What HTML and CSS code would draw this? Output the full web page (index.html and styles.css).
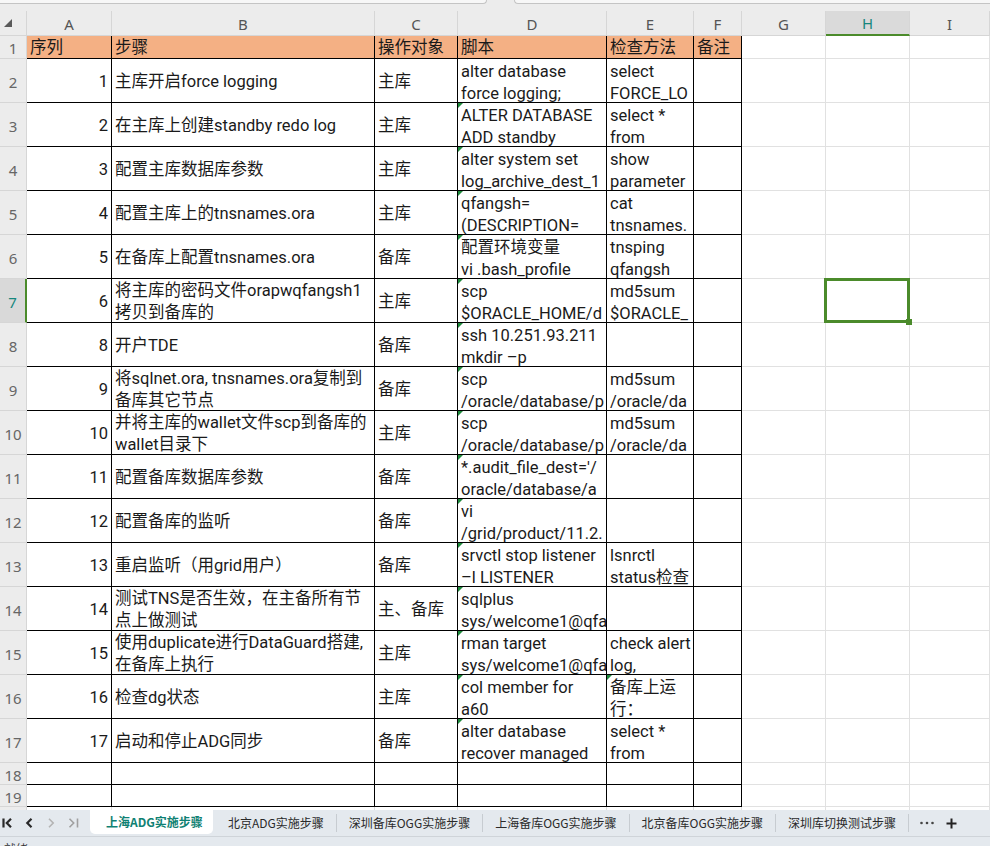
FILE: index.html
```html
<!DOCTYPE html>
<html lang="zh-CN">
<head>
<meta charset="utf-8">
<title>上海ADG实施步骤</title>
<link rel="stylesheet" href="styles.css">
</head>
<body>
<div class="app">
  <div class="topstrip"><div class="tbox tbox1"></div><div class="tbox tbox2"></div></div>
  <div class="sheet">
    <!-- column headers -->
    <div class="corner"><svg width="9" height="9" viewBox="0 0 9 9"><polygon points="8,0 8,8 0,8" fill="#5a5a5a"/></svg></div>
    <div class="ch">A</div><div class="ch">B</div><div class="ch">C</div><div class="ch">D</div><div class="ch">E</div><div class="ch">F</div><div class="ch">G</div><div class="ch act">H</div><div class="ch">I</div>

    <!-- row 1 -->
    <div class="rh">1</div>
    <div class="c t hd mid"><span>序列</span></div>
    <div class="c t hd mid"><span>步骤</span></div>
    <div class="c t hd mid"><span>操作对象</span></div>
    <div class="c t hd mid"><span>脚本</span></div>
    <div class="c t hd mid"><span>检查方法</span></div>
    <div class="c t hd mid"><span>备注</span></div>
    <div class="c"></div><div class="c"></div><div class="c"></div>

    <!-- row 2 -->
    <div class="rh">2</div>
    <div class="c t num"><span>1</span></div>
    <div class="c t mid"><span>主库开启force logging</span></div>
    <div class="c t mid"><span>主库</span></div>
    <div class="c t top">alter database<br>force logging;</div>
    <div class="c t top">select<br>FORCE_LO</div>
    <div class="c t"></div>
    <div class="c"></div><div class="c"></div><div class="c"></div>

    <!-- row 3 -->
    <div class="rh">3</div>
    <div class="c t num"><span>2</span></div>
    <div class="c t mid"><span>在主库上创建standby redo log</span></div>
    <div class="c t mid"><span>主库</span></div>
    <div class="c t top tri">ALTER DATABASE<br>ADD standby</div>
    <div class="c t top">select *<br>from</div>
    <div class="c t"></div>
    <div class="c"></div><div class="c"></div><div class="c"></div>

    <!-- row 4 -->
    <div class="rh">4</div>
    <div class="c t num"><span>3</span></div>
    <div class="c t mid"><span>配置主库数据库参数</span></div>
    <div class="c t mid"><span>主库</span></div>
    <div class="c t top tri">alter system set<br>log_archive_dest_1</div>
    <div class="c t top">show<br>parameter</div>
    <div class="c t"></div>
    <div class="c"></div><div class="c"></div><div class="c"></div>

    <!-- row 5 -->
    <div class="rh">5</div>
    <div class="c t num"><span>4</span></div>
    <div class="c t mid"><span>配置主库上的tnsnames.ora</span></div>
    <div class="c t mid"><span>主库</span></div>
    <div class="c t top tri">qfangsh=<br>(DESCRIPTION=</div>
    <div class="c t top">cat<br>tnsnames.</div>
    <div class="c t"></div>
    <div class="c"></div><div class="c"></div><div class="c"></div>

    <!-- row 6 -->
    <div class="rh">6</div>
    <div class="c t num"><span>5</span></div>
    <div class="c t mid"><span>在备库上配置tnsnames.ora</span></div>
    <div class="c t mid"><span>备库</span></div>
    <div class="c t top tri">配置环境变量<br>vi .bash_profile</div>
    <div class="c t top">tnsping<br>qfangsh</div>
    <div class="c t"></div>
    <div class="c"></div><div class="c"></div><div class="c"></div>

    <!-- row 7 -->
    <div class="rh act">7</div>
    <div class="c t num"><span>6</span></div>
    <div class="c t mid"><span>将主库的密码文件orapwqfangsh1<br>拷贝到备库的</span></div>
    <div class="c t mid"><span>主库</span></div>
    <div class="c t top tri">scp<br>$ORACLE_HOME/d</div>
    <div class="c t top">md5sum<br>$ORACLE_</div>
    <div class="c t"></div>
    <div class="c"></div><div class="c sel"></div><div class="c"></div>

    <!-- row 8 -->
    <div class="rh">8</div>
    <div class="c t num"><span>8</span></div>
    <div class="c t mid"><span>开户TDE</span></div>
    <div class="c t mid"><span>备库</span></div>
    <div class="c t top tri">ssh 10.251.93.211<br>mkdir –p</div>
    <div class="c t top"></div>
    <div class="c t"></div>
    <div class="c"></div><div class="c"></div><div class="c"></div>

    <!-- row 9 -->
    <div class="rh">9</div>
    <div class="c t num"><span>9</span></div>
    <div class="c t mid"><span>将sqlnet.ora, tnsnames.ora复制到<br>备库其它节点</span></div>
    <div class="c t mid"><span>备库</span></div>
    <div class="c t top tri">scp<br>/oracle/database/p</div>
    <div class="c t top">md5sum<br>/oracle/da</div>
    <div class="c t"></div>
    <div class="c"></div><div class="c"></div><div class="c"></div>

    <!-- row 10 -->
    <div class="rh">10</div>
    <div class="c t num"><span>10</span></div>
    <div class="c t mid"><span>并将主库的wallet文件scp到备库的<br>wallet目录下</span></div>
    <div class="c t mid"><span>主库</span></div>
    <div class="c t top tri">scp<br>/oracle/database/p</div>
    <div class="c t top">md5sum<br>/oracle/da</div>
    <div class="c t"></div>
    <div class="c"></div><div class="c"></div><div class="c"></div>

    <!-- row 11 -->
    <div class="rh">11</div>
    <div class="c t num"><span>11</span></div>
    <div class="c t mid"><span>配置备库数据库参数</span></div>
    <div class="c t mid"><span>备库</span></div>
    <div class="c t top tri">*.audit_file_dest='/<br>oracle/database/a</div>
    <div class="c t top"></div>
    <div class="c t"></div>
    <div class="c"></div><div class="c"></div><div class="c"></div>

    <!-- row 12 -->
    <div class="rh">12</div>
    <div class="c t num"><span>12</span></div>
    <div class="c t mid"><span>配置备库的监听</span></div>
    <div class="c t mid"><span>备库</span></div>
    <div class="c t top tri">vi<br>/grid/product/11.2.</div>
    <div class="c t top"></div>
    <div class="c t"></div>
    <div class="c"></div><div class="c"></div><div class="c"></div>

    <!-- row 13 -->
    <div class="rh">13</div>
    <div class="c t num"><span>13</span></div>
    <div class="c t mid"><span>重启监听（用grid用户）</span></div>
    <div class="c t mid"><span>备库</span></div>
    <div class="c t top tri">srvctl stop listener<br>–l LISTENER</div>
    <div class="c t top">lsnrctl<br>status检查</div>
    <div class="c t"></div>
    <div class="c"></div><div class="c"></div><div class="c"></div>

    <!-- row 14 -->
    <div class="rh">14</div>
    <div class="c t num"><span>14</span></div>
    <div class="c t mid"><span>测试TNS是否生效，在主备所有节<br>点上做测试</span></div>
    <div class="c t mid"><span>主、备库</span></div>
    <div class="c t top tri">sqlplus<br>sys/welcome1@qfa</div>
    <div class="c t top"></div>
    <div class="c t"></div>
    <div class="c"></div><div class="c"></div><div class="c"></div>

    <!-- row 15 -->
    <div class="rh">15</div>
    <div class="c t num"><span>15</span></div>
    <div class="c t mid"><span>使用duplicate进行DataGuard搭建,<br>在备库上执行</span></div>
    <div class="c t mid"><span>主库</span></div>
    <div class="c t top tri">rman target<br>sys/welcome1@qfa</div>
    <div class="c t top">check alert<br>log,</div>
    <div class="c t"></div>
    <div class="c"></div><div class="c"></div><div class="c"></div>

    <!-- row 16 -->
    <div class="rh">16</div>
    <div class="c t num"><span>16</span></div>
    <div class="c t mid"><span>检查dg状态</span></div>
    <div class="c t mid"><span>主库</span></div>
    <div class="c t top tri">col member for<br>a60</div>
    <div class="c t top tri">备库上运<br>行：</div>
    <div class="c t"></div>
    <div class="c"></div><div class="c"></div><div class="c"></div>

    <!-- row 17 -->
    <div class="rh">17</div>
    <div class="c t num"><span>17</span></div>
    <div class="c t mid"><span>启动和停止ADG同步</span></div>
    <div class="c t mid"><span>备库</span></div>
    <div class="c t top tri">alter database<br>recover managed</div>
    <div class="c t top">select *<br>from</div>
    <div class="c t"></div>
    <div class="c"></div><div class="c"></div><div class="c"></div>

    <!-- row 18 -->
    <div class="rh">18</div>
    <div class="c t"></div><div class="c t"></div><div class="c t"></div><div class="c t"></div><div class="c t"></div><div class="c t"></div>
    <div class="c"></div><div class="c"></div><div class="c"></div>

    <!-- row 19 -->
    <div class="rh">19</div>
    <div class="c t"></div><div class="c t"></div><div class="c t"></div><div class="c t"></div><div class="c t"></div><div class="c t"></div>
    <div class="c"></div><div class="c"></div><div class="c"></div>

    <!-- row 20 -->
    <div class="rh"></div>
    <div class="c"></div><div class="c"></div><div class="c"></div><div class="c"></div><div class="c"></div><div class="c"></div>
    <div class="c"></div><div class="c"></div><div class="c"></div>
  </div>

  <div class="tabbar">
    <div class="nav">
      <svg class="navi" width="11" height="12" viewBox="0 0 11 12"><path d="M1.5 1.5v9M9 1.8L4.8 6 9 10.2" fill="none" stroke="#2a2a2a" stroke-width="2.2"/></svg>
      <svg class="navi" width="11" height="12" viewBox="0 0 11 12"><path d="M7.5 1.8L3.3 6l4.2 4.2" fill="none" stroke="#2a2a2a" stroke-width="2.2"/></svg>
      <svg class="navi" width="11" height="12" viewBox="0 0 11 12"><path d="M3 1.8L7.2 6 3 10.2" fill="none" stroke="#b4b4b4" stroke-width="1.6"/></svg>
      <svg class="navi" width="11" height="12" viewBox="0 0 11 12"><path d="M1.5 1.8L5.7 6 1.5 10.2M9.5 1.5v9" fill="none" stroke="#a0a0a0" stroke-width="1.6"/></svg>
    </div>
    <div class="tab active">上海ADG实施步骤</div>
    <div class="tab first">北京ADG实施步骤</div><span class="sep"></span>
    <div class="tab">深圳备库OGG实施步骤</div><span class="sep"></span>
    <div class="tab">上海备库OGG实施步骤</div><span class="sep"></span>
    <div class="tab">北京备库OGG实施步骤</div><span class="sep"></span>
    <div class="tab">深圳库切换测试步骤</div><span class="sep"></span>
    <svg class="more" width="14" height="4" viewBox="0 0 14 4"><circle cx="1.5" cy="2" r="1.3" fill="#444"/><circle cx="7" cy="2" r="1.3" fill="#444"/><circle cx="12.5" cy="2" r="1.3" fill="#444"/></svg>
    <svg class="plus" width="11" height="11" viewBox="0 0 11 11"><path d="M5.5 0.5v10M0.5 5.5h10" stroke="#222" stroke-width="2"/></svg>
  </div>
  <div class="status">就绪</div>
</div>
</body>
</html>
```
FILE: styles.css
```css
* {
  box-sizing: border-box;
  margin: 0;
  padding: 0;
}

html, body {
  width: 990px;
  height: 846px;
  overflow: hidden;
}

body {
  font-family: Roboto, "Noto Sans CJK SC", sans-serif;
  background: #ececec;
  color: #1a1a1a;
}

.app {
  display: flex;
  flex-direction: column;
  height: 846px;
}

/* top remnant of the formula bar */
.topstrip {
  flex: none;
  height: 11px;
  display: flex;
  justify-content: space-between;
  background: #ececec;
}

.tbox {
  height: 4px;
  background: #f7f7f7;
  border: 1px solid #c4c4c4;
  border-top: none;
}

.tbox1 {
  width: 487px;
  border-left: none;
  border-radius: 0 0 5px 0;
}

.tbox2 {
  width: 476px;
  border-right: none;
  border-radius: 0 0 0 5px;
}

/* the sheet grid */
.sheet {
  flex: none;
  height: 799px;
  display: grid;
  grid-template-columns: 27px 85px 263px 83px 149px 87px 48px 84px 84px 1fr;
  grid-template-rows: 25px 23px repeat(16, 44px) 22px 22px 22px;
  overflow: hidden;
  background: #fff;
}

.corner {
  background: #ececec;
  border-right: 1px solid #d6d6d6;
  border-bottom: 1px solid #d6d6d6;
  display: flex;
  align-items: flex-end;
  padding: 0 0 7px 4px;
}

.ch {
  background: #ececec;
  border-right: 1px solid #d6d6d6;
  border-bottom: 1px solid #d6d6d6;
  color: #555;
  font-family: "Noto Sans", "Noto Sans CJK SC", sans-serif;
  font-size: 15px;
  display: flex;
  align-items: center;
  justify-content: center;
  padding-top: 1px;
}

.ch.act {
  background: #dadada;
  border-bottom: 2px solid #4b8b2b;
  color: #16877d;
}

.rh {
  background: #ececec;
  border-right: 1px solid #d6d6d6;
  border-bottom: 1px solid #d6d6d6;
  color: #666;
  font-family: "Noto Sans", "Noto Sans CJK SC", sans-serif;
  font-size: 15px;
  display: flex;
  align-items: center;
  justify-content: center;
  padding-top: 2px;
  overflow: hidden;
  white-space: nowrap;
}

.rh.act {
  background: #d9d9d9;
  border-right: 2px solid #4b8b2b;
  color: #16877d;
}

.c {
  border-right: 1px solid #e1e1e1;
  border-bottom: 1px solid #e1e1e1;
  font-size: 16.5px;
  line-height: 22px;
  padding: 0 3px;
  white-space: nowrap;
  overflow: hidden;
  position: relative;
  color: #1a1a1a;
}

.c.t {
  border-right-color: #000;
  border-bottom-color: #000;
}

.hd {
  background: #f4b084;
}

.mid {
  display: flex;
  align-items: center;
  padding-top: 3px;
}

.hd.mid {
  padding-top: 2px;
}

.num {
  display: flex;
  align-items: center;
  justify-content: flex-end;
  padding-top: 3px;
}

.top {
  padding-top: 2px;
}

.tri::before {
  content: "";
  position: absolute;
  left: 0;
  top: 0;
  border-top: 5px solid #1e8a3c;
  border-right: 5px solid transparent;
}

.sel {
  overflow: visible;
  z-index: 2;
}

.sel::after {
  content: "";
  position: absolute;
  left: -2px;
  top: -1px;
  right: -1px;
  bottom: -1px;
  border: 3px solid #4b8b2b;
}

.sel::before {
  content: "";
  position: absolute;
  right: -3px;
  bottom: -3px;
  width: 6px;
  height: 6px;
  background: #4b8b2b;
  z-index: 3;
}

/* sheet tabs */
.tabbar {
  flex: none;
  height: 26px;
  background: #e4e9ee;
  display: flex;
  align-items: center;
  font-family: "Noto Sans CJK SC", sans-serif;
  font-size: 12px;
  color: #2a2a2a;
  white-space: nowrap;
}

.nav {
  width: 90px;
  flex: none;
  display: flex;
  align-items: center;
  gap: 11px;
  padding-left: 2px;
}

.navi {
  display: block;
  flex: none;
}

.tab {
  padding: 0 12px;
  line-height: 24px;
}

.tab.active {
  align-self: flex-start;
  height: 24px;
  background: #fff;
  border-radius: 0 0 5px 5px;
  padding: 0 10px 0 16px;
  color: #0f8173;
  font-weight: bold;
}

.tab.first {
  padding-left: 15px;
}

.sep {
  width: 1px;
  height: 18px;
  background: #c7ccd1;
  flex: none;
}

.more {
  margin-left: 11px;
  display: block;
  flex: none;
}

.plus {
  margin-left: 12px;
  display: block;
  flex: none;
}

.status {
  flex: none;
  height: 10px;
  background: #e4e9ee;
  border-top: 1px solid #cfd4d9;
  font-family: "Noto Sans CJK SC", sans-serif;
  font-size: 12px;
  line-height: 16px;
  padding: 4px 0 0 4px;
  color: #333;
  overflow: hidden;
}
```
